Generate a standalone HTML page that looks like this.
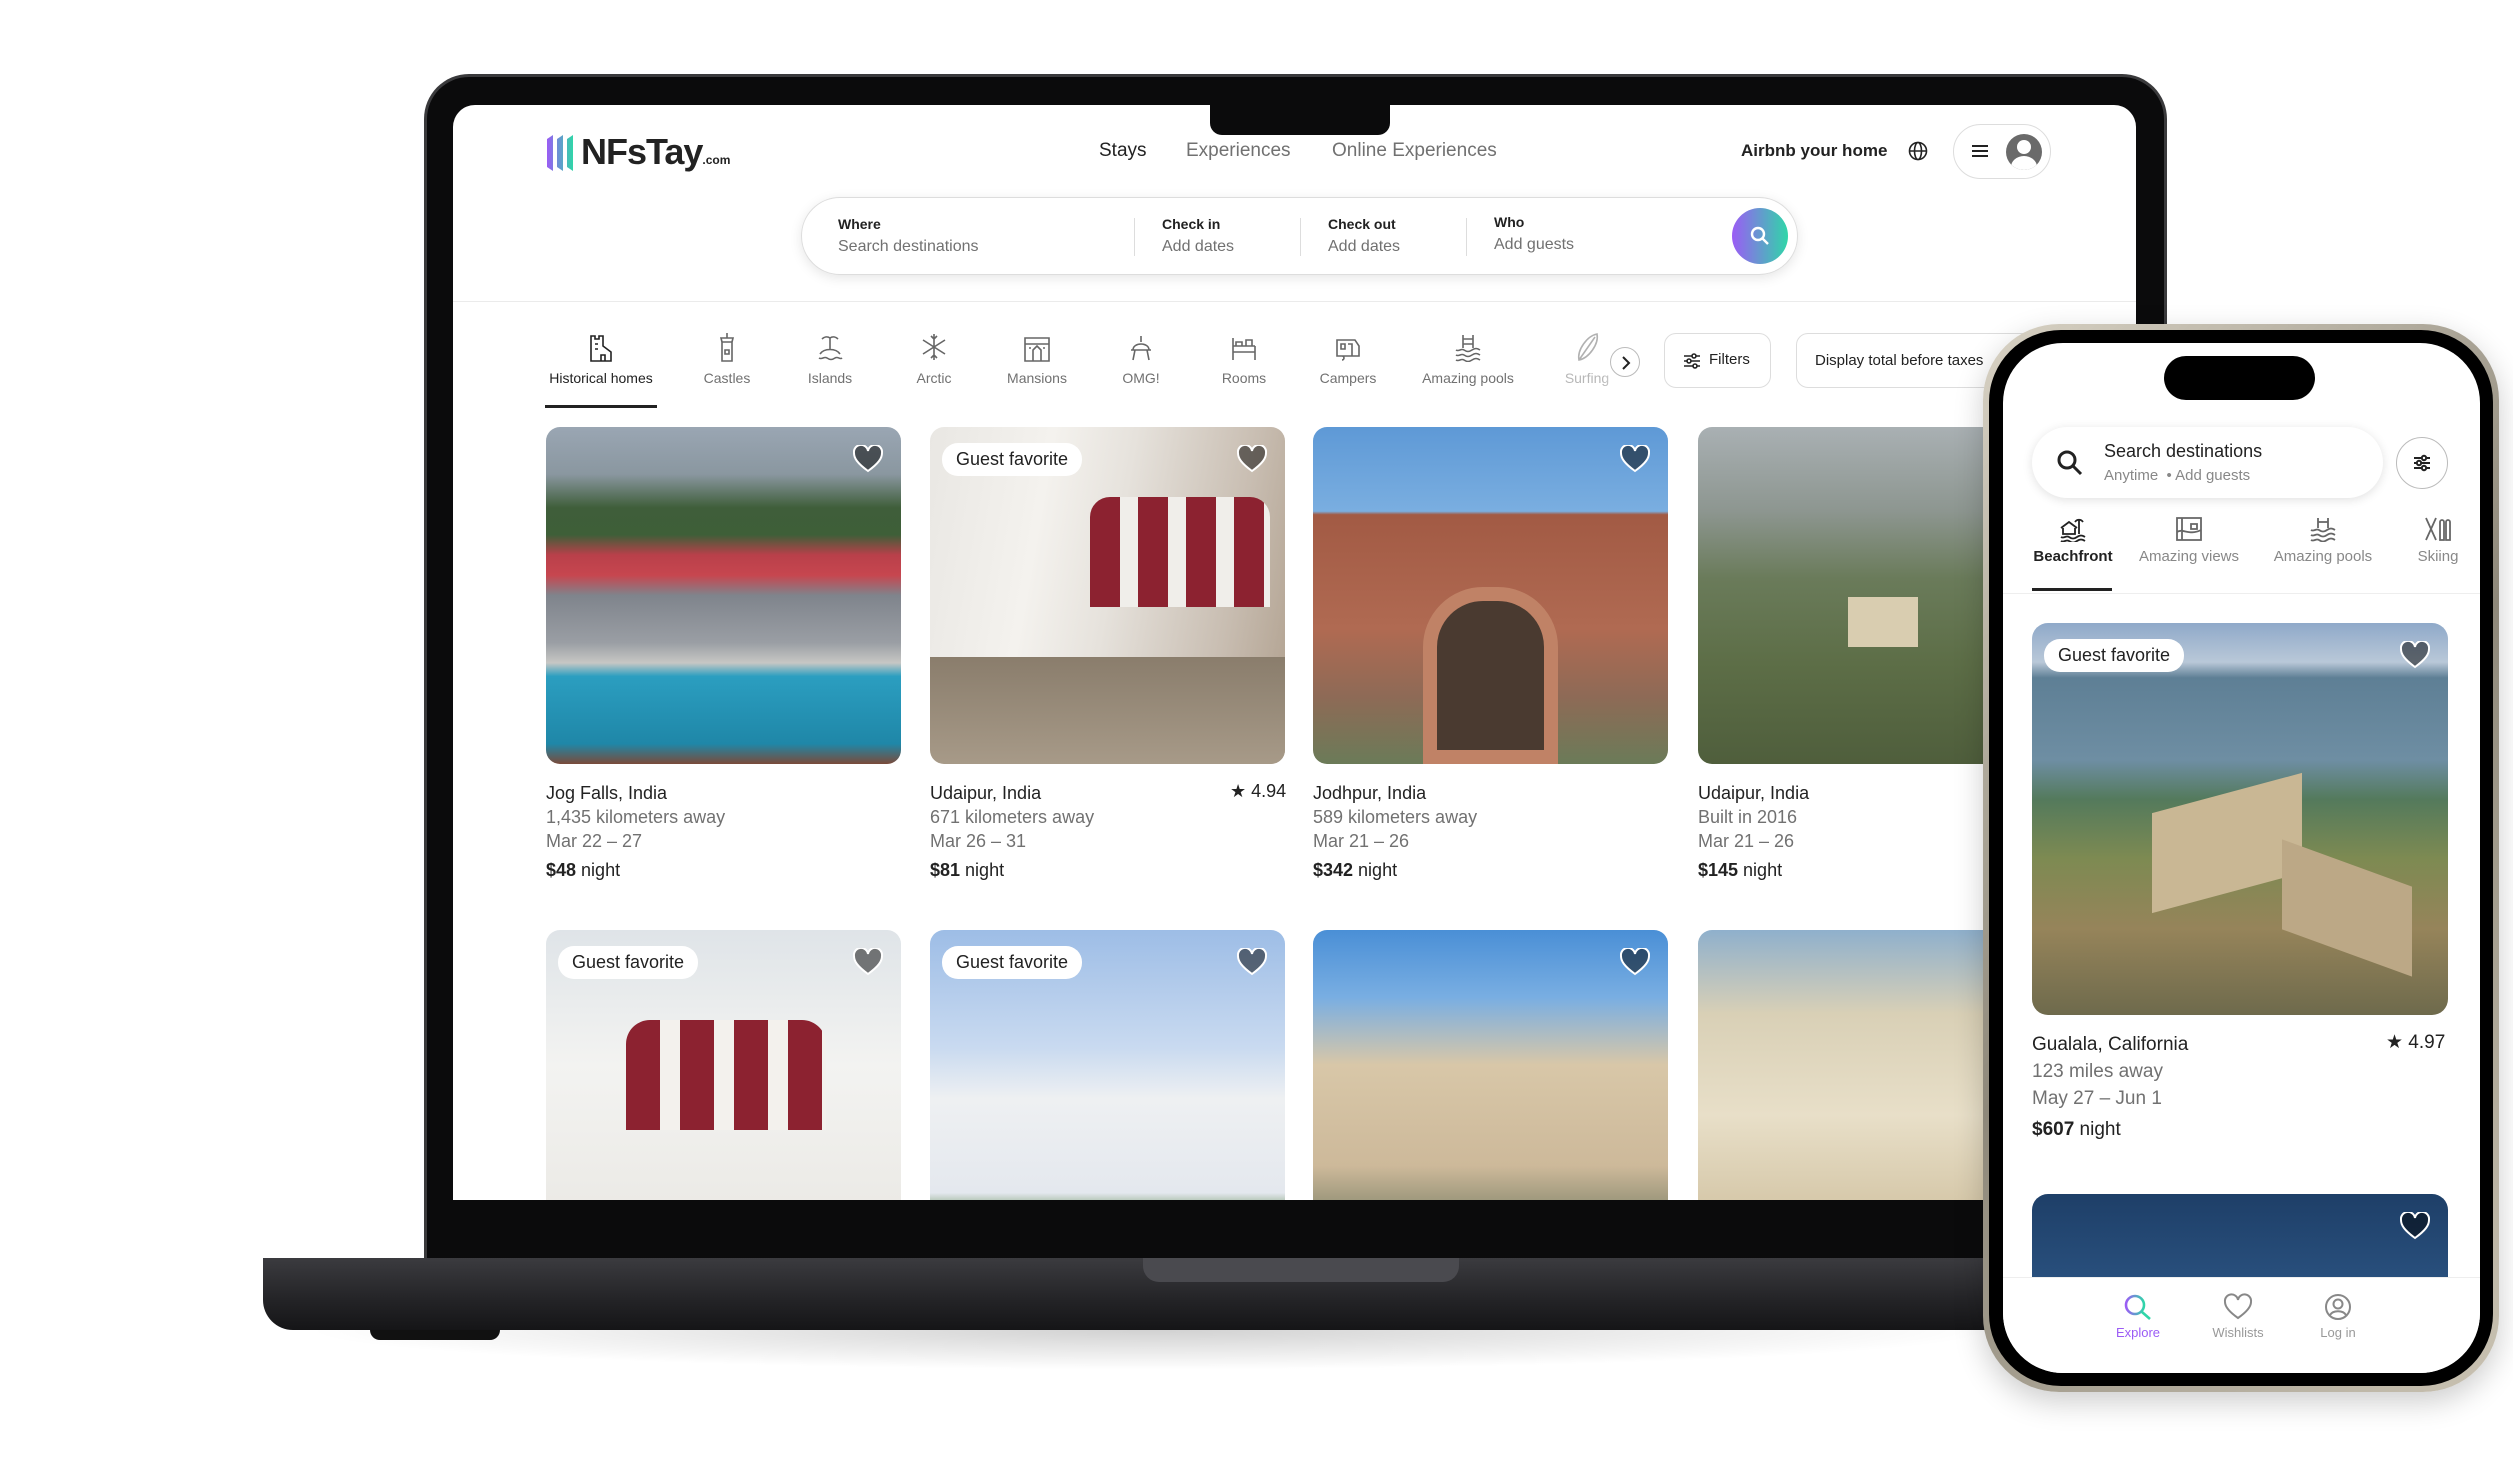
<!DOCTYPE html>
<html><head><meta charset="utf-8"><style>
*{margin:0;padding:0;box-sizing:border-box}
body{width:2513px;height:1461px;background:#fff;position:relative;overflow:hidden;font-family:"Liberation Sans",sans-serif;color:#222}
.a{position:absolute}
.t{position:absolute;white-space:nowrap}
.card{position:absolute;width:355px;height:337px;border-radius:14px;overflow:hidden}
.heart{position:absolute;top:18px;right:18px;width:30px;height:28px}
.gf{position:absolute;top:16px;left:12px;background:#fff;border-radius:16px;padding:6px 14px;font-size:18px;color:#222}
.cap{position:absolute;font-size:18px;line-height:24px}
.cap .g{color:#717171}
.cat{position:absolute;top:227px;text-align:center;font-size:14px;color:#717171;width:120px;margin-left:-60px;white-space:nowrap}
.cat svg{display:block;margin:0 auto 8px}
</style></head><body>
<div class="a" style="left:300px;top:1290px;width:1700px;height:80px;background:radial-gradient(ellipse at center,rgba(0,0,0,.18),rgba(0,0,0,0) 70%)"></div>
<div class="a" style="left:427px;top:77px;width:1737px;height:1190px;background:#0b0b0c;border-radius:42px 42px 0 0;box-shadow:0 0 0 3px #3a3a3c"></div>
<div class="a" style="left:263px;top:1258px;width:1800px;height:72px;background:linear-gradient(#3b3b3f,#232326 60%,#151517);border-radius:0 0 30px 30px"></div>
<div class="a" style="left:1143px;top:1258px;width:316px;height:24px;background:#4a4a4f;border-radius:0 0 16px 16px"></div>
<div class="a" style="left:370px;top:1330px;width:130px;height:10px;background:#111;border-radius:0 0 10px 10px"></div>
<div class="a" style="left:453px;top:105px;width:1683px;height:1095px;background:#fff;border-radius:22px 22px 0 0;overflow:hidden">
 <div class="a" style="left:757px;top:0;width:180px;height:30px;background:#0b0b0c;border-radius:0 0 12px 12px"></div>
 <svg class="a" style="left:92px;top:30px" width="30" height="36" viewBox="0 0 30 36"><defs><linearGradient id="lg" x1="0" x2="1"><stop offset="0" stop-color="#9b5cf5"/><stop offset="1" stop-color="#2fd6a8"/></linearGradient></defs><path d="M2 4 L8 0 L8 36 L2 32Z M12 4 L18 0 L18 36 L12 32Z M22 4 L28 0 L28 36 L22 32Z" fill="url(#lg)"/></svg>
 <div class="t" style="left:128px;top:26px;font-size:36px;font-weight:bold;letter-spacing:-1px">NFsTay<span style="font-size:12px;letter-spacing:0">.com</span></div>
 <div class="t" style="left:646px;top:35px;font-size:19px;color:#222">Stays</div>
 <div class="t" style="left:733px;top:35px;font-size:19px;color:#717171">Experiences</div>
 <div class="t" style="left:879px;top:35px;font-size:19px;color:#717171">Online Experiences</div>
 <div class="t" style="left:1288px;top:36px;font-size:17px;font-weight:bold">Airbnb your home</div>
 <svg class="a" style="left:1455px;top:36px" width="20" height="20" viewBox="0 0 20 20" fill="none" stroke="#222" stroke-width="1.6"><circle cx="10" cy="10" r="8.5"/><ellipse cx="10" cy="10" rx="3.5" ry="8.5"/><path d="M1.5 10h17"/></svg>
 <div class="a" style="left:1500px;top:19px;width:98px;height:55px;border:1px solid #ddd;border-radius:28px">
  <div class="a" style="left:18px;top:20px;width:16px;height:2px;background:#222;box-shadow:0 5px 0 #222,0 10px 0 #222"></div>
  <div class="a" style="left:52px;top:9px;width:36px;height:36px;border-radius:50%;background:#6a6a6a;overflow:hidden"><div class="a" style="left:11px;top:6px;width:14px;height:14px;border-radius:50%;background:#fff"></div><div class="a" style="left:5px;top:22px;width:26px;height:22px;border-radius:50%;background:#fff"></div></div>
 </div>
 <div class="a" style="left:348px;top:92px;width:997px;height:78px;border:1px solid #ddd;border-radius:40px;box-shadow:0 3px 12px rgba(0,0,0,.1)">
  <div class="t" style="left:36px;top:18px;font-size:14px;font-weight:bold">Where</div><div class="t" style="left:36px;top:40px;font-size:16px;color:#717171">Search destinations</div>
  <div class="a" style="left:332px;top:20px;width:1px;height:38px;background:#ddd"></div>
  <div class="t" style="left:360px;top:18px;font-size:14px;font-weight:bold">Check in</div><div class="t" style="left:360px;top:40px;font-size:16px;color:#717171">Add dates</div>
  <div class="a" style="left:498px;top:20px;width:1px;height:38px;background:#ddd"></div>
  <div class="t" style="left:526px;top:18px;font-size:14px;font-weight:bold">Check out</div><div class="t" style="left:526px;top:40px;font-size:16px;color:#717171">Add dates</div>
  <div class="a" style="left:664px;top:20px;width:1px;height:38px;background:#ddd"></div>
  <div class="t" style="left:692px;top:16px;font-size:14px;font-weight:bold">Who</div><div class="t" style="left:692px;top:38px;font-size:16px;color:#717171">Add guests</div>
  <div class="a" style="left:930px;top:10px;width:56px;height:56px;border-radius:50%;background:linear-gradient(90deg,#9b5cf5,#2fd6a8)"><svg class="a" style="left:18px;top:18px" width="20" height="20" viewBox="0 0 20 20" fill="none" stroke="#fff" stroke-width="2.4"><circle cx="8" cy="8" r="6"/><path d="M12.5 12.5L18 18"/></svg></div>
 </div>
 <div class="a" style="left:0;top:196px;width:1694px;height:1px;background:#ebebeb"></div>
 <div class="cat" style="left:148px;color:#222"><svg width="28" height="30" viewBox="0 0 28 30" fill="none" stroke="#222" stroke-width="1.6"><path d="M4 29V4h4v3h4V4h4v10l8 6v9zM14 29v-6h4v6M8 12h3M8 17h3"/></svg>Historical homes</div>
 <div class="a" style="left:92px;top:300px;width:112px;height:3px;background:#222"></div>
 <div class="cat" style="left:274px"><svg width="28" height="30" viewBox="0 0 28 30" fill="none" stroke="#666" stroke-width="1.6"><path d="M9 29V10h10v19zM9 10l-1-4h12l-1 4M14 6V1M12 18h4v4h-4z"/></svg>Castles</div>
 <div class="cat" style="left:377px"><svg width="28" height="30" viewBox="0 0 28 30" fill="none" stroke="#666" stroke-width="1.6"><path d="M4 22c4-6 16-6 20 0M3 26c3 2 5-2 8 0s5 2 8 0 5 2 7 0M14 18V6M14 6c-3-2-6-1-8 1M14 6c3-2 6-1 8 1"/></svg>Islands</div>
 <div class="cat" style="left:481px"><svg width="28" height="30" viewBox="0 0 28 30" fill="none" stroke="#666" stroke-width="1.6"><path d="M14 2v26M3 8l22 14M25 8L3 22M11 4l3 3 3-3M11 26l3-3 3 3"/></svg>Arctic</div>
 <div class="cat" style="left:584px"><svg width="28" height="30" viewBox="0 0 28 30" fill="none" stroke="#666" stroke-width="1.6"><path d="M2 29V6h24v23zM2 12h24M10 29V18l4-4 4 4v11M6 16h2M20 16h2"/></svg>Mansions</div>
 <div class="cat" style="left:688px"><svg width="28" height="30" viewBox="0 0 28 30" fill="none" stroke="#666" stroke-width="1.6"><path d="M6 18c0-8 16-8 16 0zM4 18h20M8 18l-2 10M20 18l2 10M14 4v6"/></svg>OMG!</div>
 <div class="cat" style="left:791px"><svg width="28" height="30" viewBox="0 0 28 30" fill="none" stroke="#666" stroke-width="1.6"><path d="M3 28V6M25 28V14M3 20h22M3 14h22M6 10h6v4H6zM16 8h6v6h-6z"/></svg>Rooms</div>
 <div class="cat" style="left:895px"><svg width="28" height="30" viewBox="0 0 28 30" fill="none" stroke="#666" stroke-width="1.6"><path d="M3 24V8h18l4 6v10zM3 24h22M8 28a2 2 0 100-4M7 12h4v5H7zM14 12h4v12"/></svg>Campers</div>
 <div class="cat" style="left:1015px"><svg width="28" height="30" viewBox="0 0 28 30" fill="none" stroke="#666" stroke-width="1.6"><path d="M2 18c3 2 5-2 8 0s5 2 8 0 5-2 8 0M2 23c3 2 5-2 8 0s5 2 8 0 5-2 8 0M2 28c3 2 5-2 8 0s5 2 8 0 5-2 8 0M9 16V3M19 16V3M9 7h10M9 12h10"/></svg>Amazing pools</div>
 <div class="cat" style="left:1134px;opacity:.5"><svg width="28" height="30" viewBox="0 0 28 30" fill="none" stroke="#666" stroke-width="1.6"><path d="M6 28C4 18 14 4 24 2 26 12 16 26 6 28zM6 28L22 5"/></svg>Surfing</div>
 <div class="a" style="left:1150px;top:220px;width:60px;height:100px;background:linear-gradient(90deg,rgba(255,255,255,0),#fff 45%)"></div>
 <div class="a" style="left:1157px;top:242px;width:30px;height:30px;border:1px solid #bbb;border-radius:50%;background:#fff"><svg class="a" style="left:9px;top:8px" width="12" height="14" viewBox="0 0 12 14" fill="none" stroke="#222" stroke-width="2"><path d="M3 1l6 6-6 6"/></svg></div>
 <div class="a" style="left:1211px;top:228px;width:107px;height:55px;border:1px solid #ddd;border-radius:12px"><svg class="a" style="left:18px;top:18px" width="18" height="18" viewBox="0 0 18 18" fill="none" stroke="#222" stroke-width="1.6"><path d="M1 4h16M1 9h16M1 14h16"/><circle cx="11" cy="4" r="2" fill="#fff"/><circle cx="6" cy="9" r="2" fill="#fff"/><circle cx="12" cy="14" r="2" fill="#fff"/></svg><div class="t" style="left:44px;top:17px;font-size:15px">Filters</div></div>
 <div class="a" style="left:1343px;top:228px;width:330px;height:55px;border:1px solid #ddd;border-radius:12px"><div class="t" style="left:18px;top:18px;font-size:15px">Display total before taxes</div></div>
 <div class="card" style="left:93px;top:322px;background:linear-gradient(180deg,#9aa6b3 0%,#8a97a0 14%,#3f5e3a 24%,#3e5f38 32%,#b9404a 38%,#c7464f 44%,#7f848c 50%,#9a9ea4 64%,#c7c7c4 70%,#2b9ec0 74%,#1f87a8 94%,#7a4a3a 100%)"><svg class="heart" viewBox="0 0 30 28"><path d="M15 26C4 18 1 13 1 8a7 7 0 0114-2 7 7 0 0114 2c0 5-3 10-14 18z" fill="rgba(0,0,0,.5)" stroke="#fff" stroke-width="2"/></svg></div>
 <div class="card" style="left:477px;top:322px;background:linear-gradient(100deg,#e9e7e3 0%,#f4f2ee 30%,#e6e2dc 50%,#c8bdb1 80%,#b0a08e 100%)"><div class="a" style="left:160px;top:70px;width:180px;height:110px;background:repeating-linear-gradient(90deg,#8c2230 0 30px,#f0eeea 30px 48px);border-radius:20px 20px 0 0"></div><div class="a" style="left:0;top:230px;width:355px;height:107px;background:linear-gradient(#8a7d6c,#a79a88)"></div><div class="gf">Guest favorite</div><svg class="heart" viewBox="0 0 30 28"><path d="M15 26C4 18 1 13 1 8a7 7 0 0114-2 7 7 0 0114 2c0 5-3 10-14 18z" fill="rgba(0,0,0,.5)" stroke="#fff" stroke-width="2"/></svg></div>
 <div class="card" style="left:860px;top:322px;background:linear-gradient(180deg,#5e99d6 0%,#7aaee0 25%,#a25a44 26%,#b06a52 60%,#8e6a56 80%,#6b7b58 100%)"><div class="a" style="left:110px;top:160px;width:135px;height:177px;background:#4a3a30;border-radius:60px 60px 0 0;border:14px solid #c08266"></div><svg class="heart" viewBox="0 0 30 28"><path d="M15 26C4 18 1 13 1 8a7 7 0 0114-2 7 7 0 0114 2c0 5-3 10-14 18z" fill="rgba(0,0,0,.5)" stroke="#fff" stroke-width="2"/></svg></div>
 <div class="card" style="left:1245px;top:322px;background:linear-gradient(180deg,#a9b0b3 0%,#8d9690 25%,#6a7b5a 45%,#5d6e47 70%,#4f5e3c 100%)"><div class="a" style="left:150px;top:170px;width:70px;height:50px;background:#d9cdb0"></div></div>
 <div class="cap" style="left:93px;top:676px">Jog Falls, India<br><span class="g">1,435 kilometers away<br>Mar 22 – 27</span><br><b style="line-height:34px">$48</b> night</div>
 <div class="cap" style="left:477px;top:676px">Udaipur, India<br><span class="g">671 kilometers away<br>Mar 26 – 31</span><br><b style="line-height:34px">$81</b> night</div>
 <div class="t" style="left:777px;top:676px;font-size:18px">★ 4.94</div>
 <div class="cap" style="left:860px;top:676px">Jodhpur, India<br><span class="g">589 kilometers away<br>Mar 21 – 26</span><br><b style="line-height:34px">$342</b> night</div>
 <div class="cap" style="left:1245px;top:676px">Udaipur, India<br><span class="g">Built in 2016<br>Mar 21 – 26</span><br><b style="line-height:34px">$145</b> night</div>
 <div class="card" style="left:93px;top:825px;background:linear-gradient(180deg,#dfe4e8 0%,#f3f3f1 40%,#e8e6e1 100%)"><div class="a" style="left:80px;top:90px;width:200px;height:110px;background:repeating-linear-gradient(90deg,#8c2230 0 34px,#f3f1ed 34px 54px);border-radius:24px 24px 0 0"></div><div class="gf">Guest favorite</div><svg class="heart" viewBox="0 0 30 28"><path d="M15 26C4 18 1 13 1 8a7 7 0 0114-2 7 7 0 0114 2c0 5-3 10-14 18z" fill="rgba(0,0,0,.5)" stroke="#fff" stroke-width="2"/></svg></div>
 <div class="card" style="left:477px;top:825px;background:linear-gradient(180deg,#9dbde6 0%,#c9daf0 35%,#eef0f2 50%,#e4e8ee 78%,#4c7a3a 86%,#b23a2e 90%,#3d6e2f 100%)"><div class="gf">Guest favorite</div><svg class="heart" viewBox="0 0 30 28"><path d="M15 26C4 18 1 13 1 8a7 7 0 0114-2 7 7 0 0114 2c0 5-3 10-14 18z" fill="rgba(0,0,0,.5)" stroke="#fff" stroke-width="2"/></svg></div>
 <div class="card" style="left:860px;top:825px;background:linear-gradient(180deg,#4a8fd6 0%,#79aee2 20%,#d8c7a8 40%,#cdb99a 70%,#8a8a70 85%,#2c9bb8 100%)"><svg class="heart" viewBox="0 0 30 28"><path d="M15 26C4 18 1 13 1 8a7 7 0 0114-2 7 7 0 0114 2c0 5-3 10-14 18z" fill="rgba(0,0,0,.5)" stroke="#fff" stroke-width="2"/></svg></div>
 <div class="card" style="left:1245px;top:825px;background:linear-gradient(180deg,#8fb0cc 0%,#d9d0b6 25%,#e8dfc8 55%,#c9b894 100%)"></div>
</div>
<div class="a" style="left:453px;top:1200px;width:1683px;height:58px;background:#0b0b0c"></div>
<div class="a" style="left:1983px;top:324px;width:516px;height:1068px;border-radius:76px;background:linear-gradient(135deg,#d8d2c4,#8e887a 50%,#c9c2b2);box-shadow:0 10px 30px rgba(0,0,0,.2)"></div>
<div class="a" style="left:1989px;top:330px;width:504px;height:1056px;border-radius:72px;background:#000"></div>
<div class="a" style="left:2003px;top:343px;width:477px;height:1030px;border-radius:60px;background:#fff;overflow:hidden">
 <div class="a" style="left:161px;top:13px;width:151px;height:44px;border-radius:22px;background:#000"></div>
 <div class="a" style="left:29px;top:84px;width:351px;height:71px;border-radius:36px;box-shadow:0 2px 10px rgba(0,0,0,.12);background:#fff">
  <svg class="a" style="left:24px;top:22px" width="28" height="28" viewBox="0 0 28 28" fill="none" stroke="#222" stroke-width="3"><circle cx="11" cy="11" r="8"/><path d="M17 17l8 8"/></svg>
  <div class="t" style="left:72px;top:14px;font-size:18px">Search destinations</div>
  <div class="t" style="left:72px;top:40px;font-size:15px;color:#888">Anytime &nbsp;• Add guests</div>
 </div>
 <div class="a" style="left:393px;top:94px;width:52px;height:52px;border:1px solid #bbb;border-radius:50%"><svg class="a" style="left:15px;top:15px" width="20" height="20" viewBox="0 0 20 20" fill="none" stroke="#222" stroke-width="2"><path d="M2 5h16M2 10h16M2 15h16"/><circle cx="12" cy="5" r="2.2" fill="#fff"/><circle cx="7" cy="10" r="2.2" fill="#fff"/><circle cx="12" cy="15" r="2.2" fill="#fff"/></svg></div>
 <div class="t" style="left:29px;top:173px;width:82px;text-align:center;font-size:15px;font-weight:bold"><svg style="display:block;margin:0 auto 6px" width="28" height="26" viewBox="0 0 28 26" fill="none" stroke="#222" stroke-width="1.8"><path d="M2 12l8-6 8 6M4 12v6h12v-6M20 18V4M16 6c2-3 6-3 8 0M2 21c3 2 5-2 8 0s5 2 8 0 5-2 8 0M2 25c3 2 5-2 8 0s5 2 8 0 5-2 8 0"/></svg>Beachfront</div>
 <div class="a" style="left:29px;top:245px;width:80px;height:3px;background:#222"></div>
 <div class="t" style="left:126px;top:173px;width:120px;text-align:center;font-size:15px;color:#888"><svg style="display:block;margin:0 auto 6px" width="28" height="26" viewBox="0 0 28 26" fill="none" stroke="#666" stroke-width="1.8"><path d="M2 2h24v22H2zM2 16c6-4 12 4 24-2M7 2v22M16 8h6v5h-6z"/></svg>Amazing views</div>
 <div class="t" style="left:260px;top:173px;width:120px;text-align:center;font-size:15px;color:#888"><svg style="display:block;margin:0 auto 6px" width="28" height="26" viewBox="0 0 28 26" fill="none" stroke="#666" stroke-width="1.8"><path d="M2 14c3 2 5-2 8 0s5 2 8 0 5-2 8 0M2 19c3 2 5-2 8 0s5 2 8 0 5-2 8 0M2 24c3 2 5-2 8 0s5 2 8 0 5-2 8 0M9 12V2M19 12V2M9 6h10"/></svg>Amazing pools</div>
 <div class="t" style="left:400px;top:173px;width:70px;text-align:center;font-size:15px;color:#888"><svg style="display:block;margin:0 auto 6px" width="28" height="26" viewBox="0 0 28 26" fill="none" stroke="#666" stroke-width="1.8"><path d="M2 2l10 22M12 2L2 24M16 6a2 2 0 014 0v18h-4zM22 6a2 2 0 014 0v18h-4z"/></svg>Skiing</div>
 <div class="a" style="left:0;top:250px;width:477px;height:1px;background:#eee"></div>
 <div class="a" style="left:29px;top:280px;width:416px;height:392px;border-radius:16px;overflow:hidden;background:linear-gradient(180deg,#8fa9c9 0%,#b9c8d8 10%,#5e7f95 14%,#6e8ea3 35%,#547a5c 45%,#7d8a52 60%,#96845a 78%,#6e6a4c 100%)">
  <div class="a" style="left:120px;top:170px;width:150px;height:100px;background:#c9b794;transform:skewY(-15deg)"></div>
  <div class="a" style="left:250px;top:240px;width:130px;height:90px;background:#bca886;transform:skewY(20deg)"></div>
  <div class="gf">Guest favorite</div>
  <svg class="heart" viewBox="0 0 30 28"><path d="M15 26C4 18 1 13 1 8a7 7 0 0114-2 7 7 0 0114 2c0 5-3 10-14 18z" fill="rgba(0,0,0,.5)" stroke="#fff" stroke-width="2"/></svg>
 </div>
 <div class="cap" style="left:29px;top:688px;font-size:19px;line-height:27px">Gualala, California<br><span class="g">123 miles away<br>May 27 – Jun 1</span><br><b style="line-height:36px">$607</b> night</div>
 <div class="t" style="left:383px;top:688px;font-size:19px">★ 4.97</div>
 <div class="a" style="left:29px;top:851px;width:416px;height:120px;border-radius:16px;background:linear-gradient(180deg,#1e3f68,#2d5685)"><svg class="heart" viewBox="0 0 30 28"><path d="M15 26C4 18 1 13 1 8a7 7 0 0114-2 7 7 0 0114 2c0 5-3 10-14 18z" fill="rgba(0,0,0,.5)" stroke="#fff" stroke-width="2"/></svg></div>
 <div class="a" style="left:0;top:934px;width:477px;height:96px;background:#fff;border-top:1px solid #eee"></div>
 <div class="t" style="left:95px;top:950px;width:80px;text-align:center;font-size:13px;color:#9b5cf5"><svg style="display:block;margin:0 auto 4px" width="30" height="28" viewBox="0 0 30 28" fill="none" stroke-width="2.6"><defs><linearGradient id="pg" x1="0" x2="1"><stop offset="0" stop-color="#9b5cf5"/><stop offset="1" stop-color="#2fd6a8"/></linearGradient></defs><circle cx="12" cy="12" r="9" stroke="url(#pg)"/><path d="M19 19l8 7" stroke="#2fd6a8"/></svg>Explore</div>
 <div class="t" style="left:195px;top:950px;width:80px;text-align:center;font-size:13px;color:#999"><svg style="display:block;margin:0 auto 4px" width="30" height="28" viewBox="0 0 30 28" fill="none" stroke="#888" stroke-width="2"><path d="M15 25C5 18 2 13 2 9a6.5 6.5 0 0113-2 6.5 6.5 0 0113 2c0 4-3 9-13 16z"/></svg>Wishlists</div>
 <div class="t" style="left:295px;top:950px;width:80px;text-align:center;font-size:13px;color:#999"><svg style="display:block;margin:0 auto 4px" width="30" height="28" viewBox="0 0 30 28" fill="none" stroke="#888" stroke-width="2"><circle cx="15" cy="14" r="12"/><circle cx="15" cy="11" r="4.5"/><path d="M7 22c3-5 13-5 16 0"/></svg>Log in</div>
</div>
</body></html>
